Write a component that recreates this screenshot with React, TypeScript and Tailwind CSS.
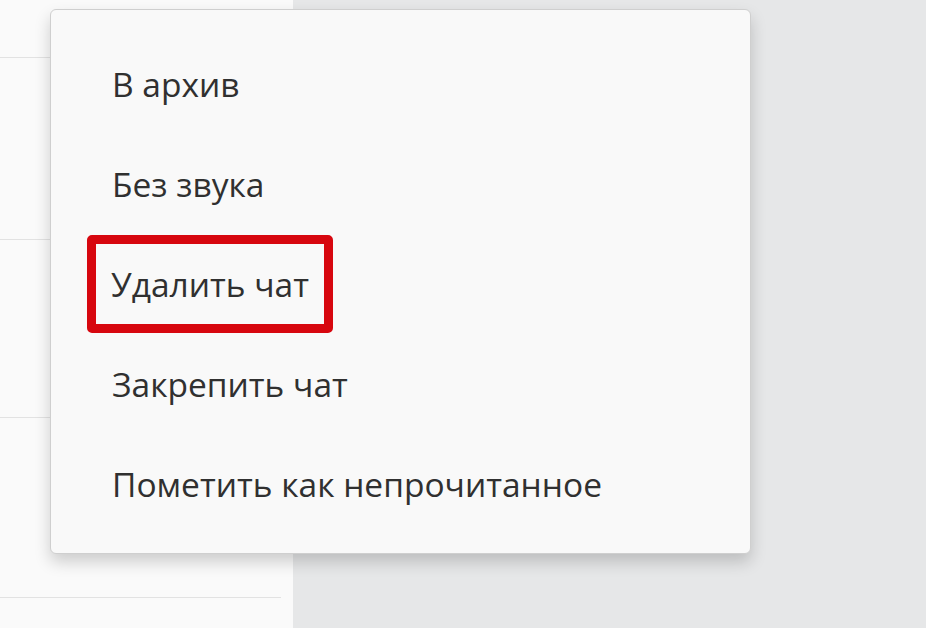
import React from "react";

const items = [
  "В архив",
  "Без звука",
  "Удалить чат",
  "Закрепить чат",
  "Пометить как непрочитанное",
];

const App = () => {
  return (
    <div
      className="relative flex h-[628px] w-[926px] overflow-hidden bg-[#e6e7e8]"
      style={{ fontFamily: '"Open Sans", "Noto Sans", sans-serif' }}>
      {/* chat list behind the menu */}
      <div className="flex h-full w-[293px] flex-col bg-[#fafafa]">
        <div className="h-[58px] shrink-0 border-b border-[#e2e2e2] mr-[12px]"></div>
        <div className="h-[182px] shrink-0 border-b border-[#e2e2e2] mr-[12px]"></div>
        <div className="h-[178px] shrink-0 border-b border-[#e2e2e2] mr-[12px]"></div>
        <div className="h-[180px] shrink-0 border-b border-[#e2e2e2] mr-[12px]"></div>
      </div>
      <div className="flex-1"></div>

      {/* context menu */}
      <div className="absolute left-[50px] top-[9px] flex h-[545px] w-[701px] flex-col rounded-[6px] border border-[#cfcfcf] bg-[#f9f9f9] pt-[24px] shadow-[0_8px_16px_rgba(0,0,0,0.18)]">
        {items.map((label) => (
          <div key={label} className="flex h-[100px] items-center pl-[61px]">
            {label === "Удалить чат" ? (
              <span className="-ml-[25px] rounded-[5px] border-[9px] border-[#d7070f] px-[15px] py-[18px] text-[33.5px] leading-[44px] text-[#303030]">
                {label}
              </span>
            ) : (
              <span className="text-[33.5px] leading-[44px] text-[#303030]">{label}</span>
            )}
          </div>
        ))}
      </div>
    </div>
  );
};

export default App;
